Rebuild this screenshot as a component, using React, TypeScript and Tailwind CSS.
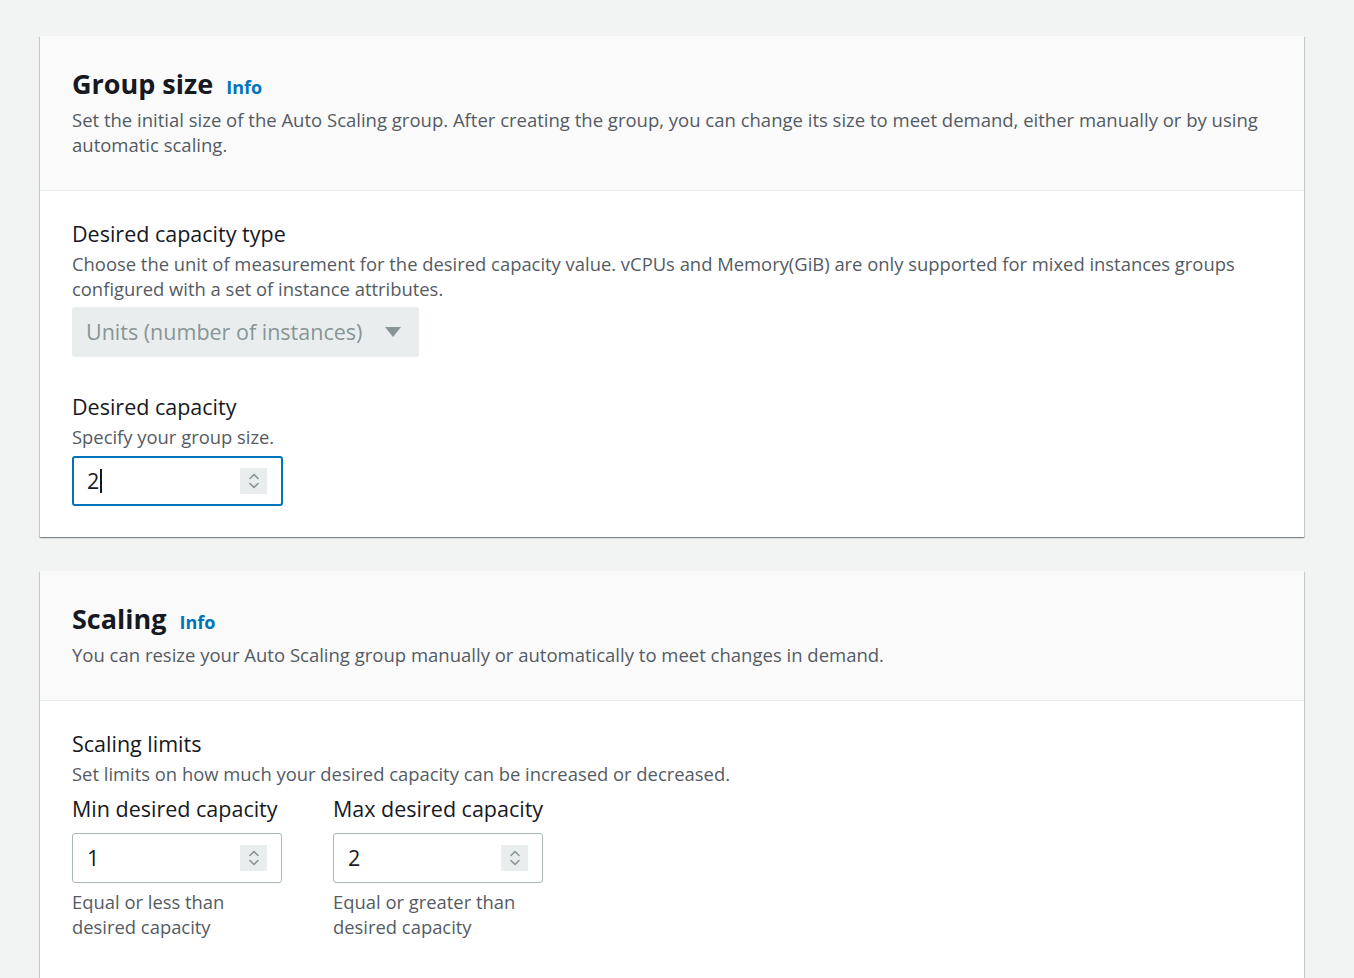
import React from "react";

const cardShadow =
  "shadow-[0_1px_1px_0_rgba(0,28,36,0.3),1px_1px_1px_0_rgba(0,28,36,0.15),-1px_1px_1px_0_rgba(0,28,36,0.15)]";

function Stepper() {
  return (
    <div className="w-[27px] h-[26px] bg-[#eaeded] flex items-center justify-center">
      <svg width="14" height="20" viewBox="0 0 14 20" fill="none" stroke="#879596" strokeWidth="1.6" strokeLinecap="round" strokeLinejoin="round">
        <path d="M3 7.5 L7 3.5 L11 7.5" />
        <path d="M3 12.5 L7 16.5 L11 12.5" />
      </svg>
    </div>
  );
}

function NumberInput({ value, focused }: { value: string; focused?: boolean }) {
  return (
    <div
      className={
        focused
          ? "w-[211px] h-[50px] border-2 border-[#0073bb] rounded-[3px] bg-white flex items-center pl-[13px] pr-[14px]"
          : "w-[210px] h-[50px] border border-[#aab7b8] rounded-[3px] bg-white flex items-center pl-[14px] pr-[14px]"
      }
    >
      <span className="flex-1 text-[21.5px] text-[#16191f] flex items-center">
        {value}
        {focused && <span className="inline-block w-[1.5px] h-[24px] bg-[#16191f] ml-[1px]" />}
      </span>
      <Stepper />
    </div>
  );
}

function Header({ title, children }: { title: string; children: React.ReactNode }) {
  return (
    <div className="bg-[#fafafa] border-b border-[#eaeded] px-[32px] pt-[29px] pb-[33px]">
      <div className="flex items-baseline gap-[13px]">
        <h2 className="text-[27px] leading-[38px] font-bold text-[#16191f]">{title}</h2>
        <span className="text-[18px] font-bold text-[#0073bb]">Info</span>
      </div>
      <p className="mt-[4px] text-[18.5px] leading-[25px] text-[#545b64]">{children}</p>
    </div>
  );
}

export default function App() {
  return (
    <div
      className="min-h-[978px] bg-[#f2f3f3] pt-[36px] pl-[40px] pr-[50px]"
      style={{ fontFamily: '"Open Sans", "Noto Sans", sans-serif' }}
    >
      <div className={"w-[1264px] bg-white " + cardShadow}>
        <Header title="Group size">
          Set the initial size of the Auto Scaling group. After creating the group, you can change its size to meet demand, either manually or by using automatic scaling.
        </Header>
        <div className="px-[32px] pt-[29px] pb-[31px]">
          <div className="text-[21.5px] leading-[28px] text-[#16191f]">Desired capacity type</div>
          <p className="text-[18.4px] leading-[25px] text-[#545b64] mt-[3px]">
            Choose the unit of measurement for the desired capacity value. vCPUs and Memory(GiB) are only supported for mixed instances groups configured with a set of instance attributes.
          </p>
          <div className="mt-[6px] w-[347px] h-[50px] bg-[#eaeded] rounded-[3px] flex items-center pl-[14px] pr-[18px]">
            <span className="flex-1 text-[21.5px] text-[#879596]">Units (number of instances)</span>
            <svg width="16" height="12" viewBox="0 0 16 12">
              <path d="M0 1 L16 1 L8 11 Z" fill="#879596" />
            </svg>
          </div>
          <div className="mt-[36px] text-[21.5px] leading-[28px] text-[#16191f]">Desired capacity</div>
          <p className="text-[18.4px] leading-[25px] text-[#545b64] mt-[3px]">Specify your group size.</p>
          <div className="mt-[7px]">
            <NumberInput value="2" focused />
          </div>
        </div>
      </div>

      <div className={"mt-[34px] w-[1264px] bg-white " + cardShadow}>
        <Header title="Scaling">
          You can resize your Auto Scaling group manually or automatically to meet changes in demand.
        </Header>
        <div className="px-[32px] pt-[29px] pb-[40px]">
          <div className="text-[21.5px] leading-[28px] text-[#16191f]">Scaling limits</div>
          <p className="text-[18.4px] leading-[25px] text-[#545b64] mt-[3px]">
            Set limits on how much your desired capacity can be increased or decreased.
          </p>
          <div className="flex gap-[51px] mt-[9px]">
            <div className="w-[210px]">
              <div className="text-[21.5px] leading-[28px] text-[#16191f] whitespace-nowrap">Min desired capacity</div>
              <div className="mt-[10px]">
                <NumberInput value="1" />
              </div>
              <p className="mt-[6px] text-[18.4px] leading-[25px] text-[#545b64]">Equal or less than desired capacity</p>
            </div>
            <div className="w-[210px]">
              <div className="text-[21.5px] leading-[28px] text-[#16191f] whitespace-nowrap">Max desired capacity</div>
              <div className="mt-[10px]">
                <NumberInput value="2" />
              </div>
              <p className="mt-[6px] text-[18.4px] leading-[25px] text-[#545b64]">Equal or greater than desired capacity</p>
            </div>
          </div>
        </div>
      </div>
    </div>
  );
}
